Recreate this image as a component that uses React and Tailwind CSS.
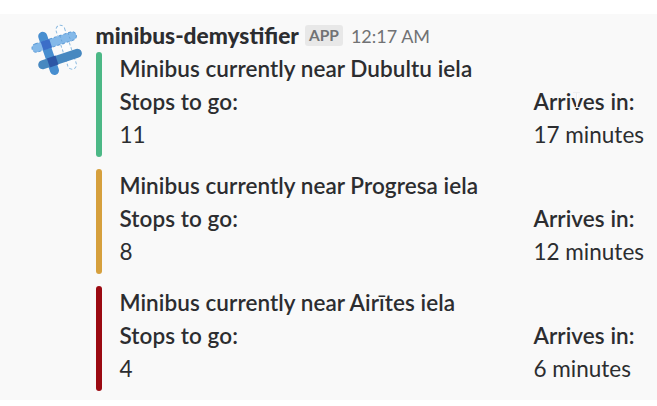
const arrivals = [
  { place: "Dubultu iela", stops: 11, eta: "17 minutes", bar: "bg-[#4cb886]", hovered: true },
  { place: "Progresa iela", stops: 8, eta: "12 minutes", bar: "bg-[#d6a03d]" },
  { place: "Airītes iela", stops: 4, eta: "6 minutes", bar: "bg-[#9b0a12]" },
];

function Avatar() {
  return (
    <svg className="mt-[6px] h-[60px] w-[60px] shrink-0" viewBox="28 20 60 60" fill="none">
      <rect x="-22.9" y="-4.4" width="45.8" height="8.8" rx="4.4" transform="translate(66.2 47.2) rotate(71.5)" stroke="#8dbbe0" strokeWidth="1" strokeDasharray="3 2" fill="#fbfcfd" />
      <path d="M42.7 36.2L54.5 70.5" stroke="#478ed0" strokeWidth="9" strokeLinecap="round" />
      <path d="M42.7 64.8L77.4 53.3" stroke="#4788c0" strokeWidth="9" strokeLinecap="round" />
      <rect x="-23.2" y="-4.3" width="46.4" height="8.6" rx="4.3" transform="translate(54.2 42) rotate(-18.5)" stroke="#5b9ad6" strokeWidth="1" strokeDasharray="3 2" fill="#84b9e9" />
      <path d="M60 35.8L63 44.5M68 33L71 41.5" stroke="#69a4d8" strokeWidth="1" strokeDasharray="2 2" />
      <path d="M40.6 41.8L49.2 38.9L52.1 47.500L43.5 50.4Z" fill="#3b6ec8" />
      <path d="M46.900 58.500L55.400 55.600L58.400 64.500L49.900 67.400Z" fill="#2c56a5" />
    </svg>
  );
}

function TextCursor() {
  return (
    <svg className="absolute left-[38px] top-[6px] h-[18px] w-[9px]" viewBox="0 0 9 18" fill="none">
      <path d="M1 1.5H8M4.500 1.500V16.500M1 16.500H8" stroke="#eeeeee" />
      <path d="M5.500 3V16" stroke="#ffffff" strokeOpacity="0.6" />
    </svg>
  );
}

function Arrival({ place, stops, eta, bar, hovered }) {
  return (
    <section className="flex h-[105px] gap-[17.5px]">
      <div className={`w-[6px] shrink-0 rounded-full ${bar}`} />
      <div className="flex-1 text-[22.5px] leading-[33px]">
        <h2 className="font-semibold tracking-[0.07px]">Minibus currently near {place}</h2>
        <dl className="grid grid-cols-[414px_1fr] whitespace-nowrap">
          <div>
            <dt className="font-semibold tracking-[0.07px]">Stops to go:</dt>
            <dd>{stops}</dd>
          </div>
          <div>
            <dt className="relative font-semibold tracking-[0.07px]">
              Arrives in:
              {hovered && <TextCursor />}
            </dt>
            <dd>{eta}</dd>
          </div>
        </dl>
      </div>
    </section>
  );
}

export default function App() {
  return (
    <div className="h-[406px] w-[657px] overflow-hidden bg-white pt-[14px] font-['Lato',sans-serif] text-[#2c2d30]">
      <main className="flex h-[386px] gap-[8px] bg-[#f9f9f9] pl-[28px]">
        <Avatar />
        <div className="flex-1">
          <header className="flex h-[38px] items-center pt-[5px] leading-[33px]">
            <span className="-ml-[0.5px] text-[22.7px] font-black">minibus-demystifier</span>
            <span className="ml-[6px] flex h-[21px] w-[38px] items-center justify-center rounded-[3px] bg-[#e8e8e8] text-[15.500px] font-bold text-[#717274]">APP</span>
            <span className="ml-[8px] pt-px text-[18px] text-[#717274]">12:17 AM</span>
          </header>
          <div className="flex flex-col gap-3">
            {arrivals.map((a) => (
              <Arrival key={a.place} {...a} />
            ))}
          </div>
        </div>
      </main>
    </div>
  );
}
